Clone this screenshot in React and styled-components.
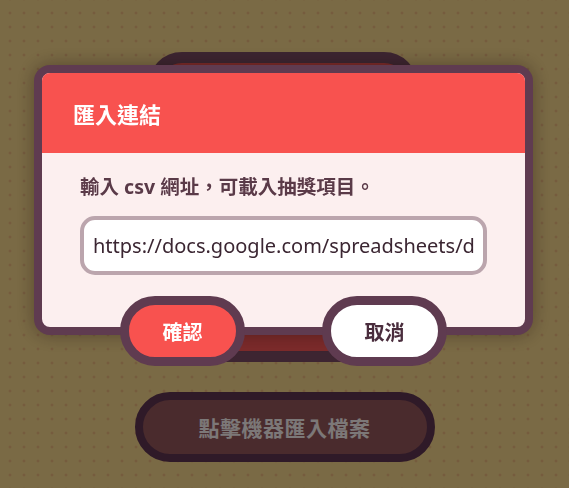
import React from 'react'
import styled, { createGlobalStyle } from 'styled-components'

const GlobalStyle = createGlobalStyle`
  html, body {
    margin: 0;
    padding: 0;
  }
  body {
    background-color: #f5d48a;
    background-image: radial-gradient(circle, rgba(214, 120, 96, 0.3) 1px, transparent 1.8px);
    background-size: 14px 14px;
    background-position: 3px 6px;
    font-family: "Noto Sans", "Noto Sans CJK TC", sans-serif;
  }
`;

const Stage = styled.div`
  height: 488px;
  display: flex;
  flex-direction: column;
  align-items: center;
  padding-top: 52px;
  box-sizing: border-box;
  gap: 30px;
`;

const Machine = styled.div`
  width: 270px;
  height: 310px;
  box-sizing: border-box;
  border: 11px solid #7a4a62;
  border-radius: 34px;
  background: #f85656;
  margin-left: -3px;
`;

const FileButton = styled.button`
  width: 300px;
  height: 70px;
  box-sizing: border-box;
  border: 8px solid #5e3550;
  border-radius: 35px;
  background: #94565a;
  color: #f8f0f0;
  font-family: "Noto Sans CJK TC", sans-serif;
  font-weight: 700;
  font-size: 21px;
  letter-spacing: 0.5px;
`;

const Overlay = styled.div`
  position: fixed;
  inset: 0;
  background: rgba(0, 0, 0, 0.5);
`;

const Dialog = styled.div`
  position: fixed;
  left: 34px;
  top: 65px;
  width: 499px;
  box-sizing: border-box;
  border: 8px solid #5f3b50;
  border-radius: 16px;
  background: #fcefef;
  box-shadow: 0 0 18px rgba(20, 10, 0, 0.35);
`;

const Header = styled.div`
  height: 80px;
  box-sizing: border-box;
  background: #f8524f;
  border-radius: 8px 8px 0 0;
  display: flex;
  align-items: center;
  padding: 0 0 0 31px;
  color: #ffffff;
  font-family: "Noto Sans CJK TC", sans-serif;
  font-weight: 700;
  font-size: 22px;
`;

const Body = styled.div`
  padding: 21px 38px 52px;
  display: flex;
  flex-direction: column;
  gap: 16px;
`;

const Hint = styled.p`
  margin: 0;
  font-family: "Noto Sans", "Noto Sans CJK TC", sans-serif;
  font-weight: 700;
  font-size: 19.5px;
  line-height: 26px;
  color: #5a3a48;
`;

const UrlInput = styled.input`
  height: 59px;
  box-sizing: border-box;
  width: 100%;
  border: 4px solid #bba5ad;
  border-radius: 15px;
  background: #ffffff;
  padding: 0 9px;
  font-family: "Noto Sans", sans-serif;
  font-size: 20px;
  color: #3b2632;
  outline: none;
`;

const Actions = styled.div`
  position: absolute;
  left: 0;
  right: 0;
  bottom: -39px;
  display: flex;
  justify-content: center;
  gap: 77px;
`;

const ActionButton = styled.button`
  width: 125px;
  height: 70px;
  box-sizing: border-box;
  border: 9px solid #5f3b50;
  border-radius: 35px;
  background: ${p => (p.$primary ? '#f8524f' : '#ffffff')};
  color: ${p => (p.$primary ? '#ffffff' : '#4a2d3d')};
  font-family: "Noto Sans CJK TC", sans-serif;
  font-weight: 700;
  font-size: 20px;
`;

export default function App() {
  return (
    <>
      <GlobalStyle />
      <Stage>
        <Machine />
        <FileButton>點擊機器匯入檔案</FileButton>
      </Stage>
      <Overlay />
      <Dialog>
        <Header>匯入連結</Header>
        <Body>
          <Hint>輸入 csv 網址，可載入抽獎項目。</Hint>
          <UrlInput readOnly value="https://docs.google.com/spreadsheets/d/1xYz/edit" />
        </Body>
        <Actions>
          <ActionButton $primary>確認</ActionButton>
          <ActionButton>取消</ActionButton>
        </Actions>
      </Dialog>
    </>
  )
}
